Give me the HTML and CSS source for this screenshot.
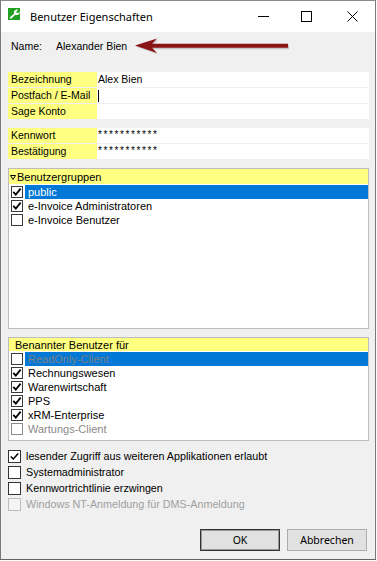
FILE: index.html
```html
<!DOCTYPE html>
<html lang="de">
<head>
<meta charset="utf-8">
<title>Benutzer Eigenschaften</title>
<link rel="stylesheet" href="styles.css">
</head>
<body>
<div class="window">
  <div class="titlebar">
    <svg class="app-icon" width="12" height="12" viewBox="0 0 12 12">
      <rect width="12" height="12" fill="#22a022"/>
      <path d="M1.6 9.8 L6.1 5.5 C5.6 4.1 6.1 2.6 7.4 1.9 C8.3 1.4 9.3 1.4 10.1 1.8 L8.4 3.6 L8.7 4.9 L10 5.2 L11.6 3.5 C11.9 4.5 11.5 5.7 10.6 6.4 C9.6 7.1 8.4 7.2 7.4 6.7 L2.8 11 Z" fill="#fff"/>
    </svg>
    <span class="title">Benutzer Eigenschaften</span>
    <div class="controls">
      <div class="ctrl ctrl-min"><svg width="11" height="11" viewBox="0 0 11 11"><path d="M0 5.5 H11" stroke="#000" stroke-width="1"/></svg></div>
      <div class="ctrl"><svg width="11" height="11" viewBox="0 0 11 11"><rect x="0.5" y="0.5" width="10" height="10" fill="none" stroke="#000" stroke-width="1"/></svg></div>
      <div class="ctrl"><svg width="11" height="11" viewBox="0 0 11 11"><path d="M0.5 0.5 L10.5 10.5 M10.5 0.5 L0.5 10.5" stroke="#000" stroke-width="1"/></svg></div>
    </div>
  </div>

  <div class="content">
    <div class="name-row">
      <span class="name-label">Name:</span>
      <span class="name-value">Alexander Bien</span>
      <svg class="arrow" width="156" height="18" viewBox="0 0 156 18">
        <path d="M1 9.6 L23 2.6 L18 7.9 L154 7.9 L154 12.3 L18 12.3 L23 17.6 Z" fill="#9a9a9a" opacity="0.5"/>
        <path d="M0 8.5 L22 1.5 L17 6.8 L153 6.8 L153 10.8 L17 10.8 L22 16 Z" fill="#8b1414"/>
      </svg>
    </div>

    <div class="fields">
      <div class="field-row"><div class="field-label">Bezeichnung</div><div class="field-value">Alex Bien</div></div>
      <div class="field-row"><div class="field-label">Postfach / E-Mail</div><div class="field-value"><span class="caret"></span></div></div>
      <div class="field-row"><div class="field-label">Sage Konto</div><div class="field-value"></div></div>
    </div>

    <div class="fields fields-second">
      <div class="field-row"><div class="field-label">Kennwort</div><div class="field-value password">***********</div></div>
      <div class="field-row"><div class="field-label">Bestätigung</div><div class="field-value password">***********</div></div>
    </div>

    <div class="panel panel-groups">
      <div class="panel-header header-groups">
        <svg class="collapse" width="6" height="5" viewBox="0 0 6 5"><path d="M0.5 0.5 H5.5 L3 4.5 Z" fill="none" stroke="#000" stroke-width="1"/></svg>
        <span>Benutzergruppen</span>
      </div>
      <div class="list-row">
        <div class="check-cell"><span class="cb checked"><svg width="10" height="10" viewBox="0 0 10 10"><path d="M1.3 4.8 L3.8 7.6 L8.6 1.6" fill="none" stroke="#000" stroke-width="1.8"/></svg></span></div>
        <div class="item-text selected">public</div>
      </div>
      <div class="list-row">
        <div class="check-cell"><span class="cb checked"><svg width="10" height="10" viewBox="0 0 10 10"><path d="M1.3 4.8 L3.8 7.6 L8.6 1.6" fill="none" stroke="#000" stroke-width="1.8"/></svg></span></div>
        <div class="item-text">e-Invoice Administratoren</div>
      </div>
      <div class="list-row">
        <div class="check-cell"><span class="cb"></span></div>
        <div class="item-text">e-Invoice Benutzer</div>
      </div>
    </div>

    <div class="panel panel-named">
      <div class="panel-header header-named">Benannter Benutzer für</div>
      <div class="list-row">
        <div class="check-cell"><span class="cb"></span></div>
        <div class="item-text selected muted-selected">ReadOnly-Client</div>
      </div>
      <div class="list-row">
        <div class="check-cell"><span class="cb checked"><svg width="10" height="10" viewBox="0 0 10 10"><path d="M1.3 4.8 L3.8 7.6 L8.6 1.6" fill="none" stroke="#000" stroke-width="1.8"/></svg></span></div>
        <div class="item-text">Rechnungswesen</div>
      </div>
      <div class="list-row">
        <div class="check-cell"><span class="cb checked"><svg width="10" height="10" viewBox="0 0 10 10"><path d="M1.3 4.8 L3.8 7.6 L8.6 1.6" fill="none" stroke="#000" stroke-width="1.8"/></svg></span></div>
        <div class="item-text">Warenwirtschaft</div>
      </div>
      <div class="list-row">
        <div class="check-cell"><span class="cb checked"><svg width="10" height="10" viewBox="0 0 10 10"><path d="M1.3 4.8 L3.8 7.6 L8.6 1.6" fill="none" stroke="#000" stroke-width="1.8"/></svg></span></div>
        <div class="item-text">PPS</div>
      </div>
      <div class="list-row">
        <div class="check-cell"><span class="cb checked"><svg width="10" height="10" viewBox="0 0 10 10"><path d="M1.3 4.8 L3.8 7.6 L8.6 1.6" fill="none" stroke="#000" stroke-width="1.8"/></svg></span></div>
        <div class="item-text">xRM-Enterprise</div>
      </div>
      <div class="list-row">
        <div class="check-cell"><span class="cb cb-light"></span></div>
        <div class="item-text muted">Wartungs-Client</div>
      </div>
    </div>

    <div class="options">
      <div class="opt"><span class="box checked"><svg width="11" height="11" viewBox="0 0 11 11"><path d="M1.8 5.4 L4.3 8 L9.2 2.4" fill="none" stroke="#000" stroke-width="1.5"/></svg></span><span>lesender Zugriff aus weiteren Applikationen erlaubt</span></div>
      <div class="opt"><span class="box"></span><span>Systemadministrator</span></div>
      <div class="opt"><span class="box"></span><span>Kennwortrichtlinie erzwingen</span></div>
      <div class="opt disabled"><span class="box"></span><span>Windows NT-Anmeldung für DMS-Anmeldung</span></div>
    </div>

    <div class="buttons">
      <button class="btn btn-default">OK</button>
      <button class="btn">Abbrechen</button>
    </div>
  </div>
</div>
</body>
</html>
```

FILE: styles.css
```css
html, body {
  margin: 0;
  padding: 0;
  background: #ffffff;
}

.window {
  width: 376px;
  height: 560px;
  box-sizing: border-box;
  border: 1px solid #7a7a7a;
  border-top-color: #8a8a8a;
  border-bottom-color: #646464;
  background: #f0f0f0;
  display: flex;
  flex-direction: column;
  font-family: "Liberation Sans", Arial, sans-serif;
  font-size: 10.5px;
  color: #000;
}

/* title bar */
.titlebar {
  flex: none;
  height: 31px;
  background: #ffffff;
  display: flex;
  align-items: center;
}

.app-icon {
  align-self: flex-start;
  margin: 7px 10px 0 7px;
  flex: none;
}

.title {
  font-family: "Noto Sans", "Open Sans", sans-serif;
  font-size: 11px;
  color: #000;
  margin-top: -1px;
}

.controls {
  margin-left: auto;
  display: flex;
  height: 31px;
}

.ctrl {
  width: 46px;
  height: 31px;
  display: flex;
  align-items: center;
  justify-content: center;
}

.ctrl-min svg {
  margin-left: 7px;
}

/* content */
.content {
  flex: 1;
  display: flex;
  flex-direction: column;
  padding: 0 6px 0 7px;
}

.name-row {
  margin-top: 6px;
  height: 16px;
  display: flex;
  align-items: center;
}

.name-label {
  width: 45px;
  padding-left: 3px;
  flex: none;
}

.name-value {
  flex: none;
}

.arrow {
  margin-left: 8px;
  flex: none;
}

.fields {
  margin-top: 18px;
  display: flex;
  flex-direction: column;
  gap: 1px;
}

.fields-second {
  margin-top: 9px;
}

.field-row {
  display: flex;
  height: 15px;
}

.field-label {
  width: 89px;
  box-sizing: border-box;
  padding-left: 3px;
  background: #ffff80;
  line-height: 15px;
  white-space: nowrap;
}

.field-value {
  flex: 1;
  background: #ffffff;
  padding-left: 1px;
  line-height: 15px;
  display: flex;
  align-items: center;
}

.password {
  align-items: flex-start;
  line-height: 12px;
  font-size: 10px;
  letter-spacing: 1.6px;
  padding-top: 1px;
}

.caret {
  width: 1px;
  height: 12px;
  background: #000;
}

/* panels */
.panel {
  margin-top: 9px;
  border: 1px solid #bdbdbd;
  background: #ffffff;
  box-sizing: border-box;
}

.panel-groups {
  height: 161px;
}

.panel-named {
  margin-top: 8px;
  height: 104px;
}

.panel-header {
  background: #ffff80;
  display: flex;
  align-items: center;
  margin-bottom: 1px;
  font-size: 11px;
}

.header-groups {
  height: 15px;
}

.header-named {
  height: 13px;
  padding-left: 6px;
}

.collapse {
  margin: 1px 1px 0 1px;
}

.list-row {
  display: flex;
  height: 14px;
}

.check-cell {
  width: 16px;
  flex: none;
  padding-left: 2px;
  box-sizing: border-box;
  display: flex;
  align-items: center;
}

.cb {
  width: 12px;
  height: 12px;
  box-sizing: border-box;
  border: 1px solid #3a3a3a;
  background: #ffffff;
  display: flex;
  align-items: center;
  justify-content: center;
}

.cb-light {
  border-color: #8a8a8a;
}

.item-text {
  flex: 1;
  padding-left: 3px;
  line-height: 14px;
  font-size: 11px;
  white-space: nowrap;
}

.selected {
  background: #0078d7;
  color: #ffffff;
}

.muted-selected {
  color: #7a7f86;
}

.muted {
  color: #8a8a8a;
}

/* options */
.options {
  margin-top: 7px;
  display: flex;
  flex-direction: column;
  font-size: 10.75px;
}

.opt {
  height: 16px;
  display: flex;
  align-items: center;
  white-space: nowrap;
}

.box {
  width: 13px;
  height: 13px;
  box-sizing: border-box;
  border: 1px solid #333333;
  background: #ffffff;
  margin-right: 5px;
  flex: none;
  display: flex;
  align-items: center;
  justify-content: center;
}

.disabled {
  color: #a0a0a0;
}

.disabled .box {
  border-color: #bcbcbc;
  background: #f4f4f4;
}

/* buttons */
.buttons {
  margin-top: 17px;
  display: flex;
  justify-content: flex-end;
  gap: 7px;
  padding-right: 2px;
}

.btn {
  width: 80px;
  height: 22px;
  box-sizing: border-box;
  border: 1px solid #adadad;
  background: #e1e1e1;
  font-family: "Noto Sans", "Open Sans", sans-serif;
  font-size: 10.5px;
  color: #000;
  padding: 0;
  margin: 0;
}

.btn-default {
  border: 1px solid #333333;
  box-shadow: inset 0 0 0 1px #9a9a9a;
}
```
